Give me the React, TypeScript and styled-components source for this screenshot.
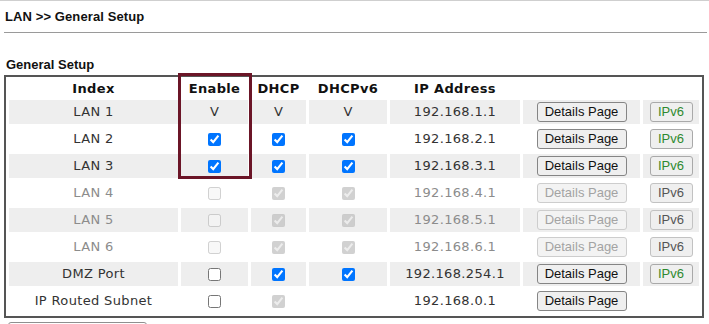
import React from 'react';
import styled, { createGlobalStyle } from 'styled-components';

const Global = createGlobalStyle`
  html, body { margin: 0; padding: 0; background: #fff; }
  body { font-family: "Liberation Sans", Arial, sans-serif; overflow: hidden; }
`;

const Page = styled.div`
  width: 709px;
  height: 324px;
  overflow: hidden;
  box-sizing: border-box;
  border-top: 1px solid #cfcfcf;
`;

const Title = styled.h1`
  margin: 0;
  padding: 8px 0 0 5px;
  font-size: 13px;
  line-height: 15px;
  font-weight: bold;
  color: #111;
  letter-spacing: 0.1px;
`;

const Rule = styled.hr`
  margin: 8px 2px 0 4px;
  border: 0;
  border-top: 1px solid #9a9a9a;
  height: 0;
`;

const SectionTitle = styled.h2`
  margin: 24px 0 0 6px;
  font-size: 13px;
  line-height: 15px;
  font-weight: bold;
  color: #111;
`;

const TableWrap = styled.div`
  position: relative;
  margin: 3px 0 0 4px;
  width: 700px;
`;

const Highlight = styled.div`
  position: absolute;
  top: -2px;
  left: 174px;
  width: 74px;
  height: 106px;
  box-sizing: border-box;
  border: 3px solid #6b1527;
  pointer-events: none;
`;

const Table = styled.table`
  width: 700px;
  table-layout: fixed;
  border-collapse: separate;
  border-spacing: 3px;
  border: 2px solid #555;
  font-family: "DejaVu Sans", Verdana, sans-serif;
  font-size: 13px;
  letter-spacing: 0.35px;
`;

const Th = styled.th`
  height: 17px;
  padding: 0;
  text-align: center;
  vertical-align: middle;
  font-weight: bold;
  color: #111;
  white-space: nowrap;
`;

const Row = styled.tr<{ $shade: boolean }>`
  background: ${p => (p.$shade ? '#eeeeee' : '#ffffff')};
`;

const Td = styled.td<{ $muted?: boolean }>`
  height: 24px;
  padding: 0;
  text-align: center;
  vertical-align: middle;
  color: ${p => (p.$muted ? '#8c8c8c' : '#333')};
  white-space: nowrap;
  line-height: 16px;
`;

const Check = styled.input.attrs({ type: 'checkbox' })`
  margin: 0;
  width: 13px;
  height: 13px;
  vertical-align: middle;
`;

type BtnKind = 'normal' | 'disabled' | 'green' | 'muted';

const Btn = styled.button<{ $kind: BtnKind; $w: number }>`
  width: ${p => p.$w}px;
  height: 20px;
  padding: 0;
  font-family: "Liberation Sans", Arial, sans-serif;
  font-size: 13px;
  line-height: 18px;
  letter-spacing: 0;
  border-radius: 3px;
  vertical-align: middle;
  background: ${p => (p.$kind === 'disabled' ? '#f3f3f3' : '#efefef')};
  border: 1px solid
    ${p =>
      p.$kind === 'disabled' ? '#cdcdcd' : p.$kind === 'muted' ? '#c2c2c2' : p.$kind === 'green' ? '#a9a9a9' : '#858585'};
  color: ${p =>
    p.$kind === 'disabled' ? '#a3a3a3' : p.$kind === 'green' ? '#2f8a2f' : p.$kind === 'muted' ? '#555' : '#111'};
`;

const BottomBox = styled.div`
  margin: 4px 0 0 8px;
  width: 139px;
  height: 22px;
  box-sizing: border-box;
  border: 1px solid #8f8f8f;
  border-radius: 3px;
  background: #fff;
`;

type Cell = 'V' | 'on' | 'off' | 'dis-on' | 'dis-off' | 'none';

interface LanRow {
  name: string;
  muted: boolean;
  enable: Cell;
  dhcp: Cell;
  dhcp6: Cell;
  ip: string;
  details: 'normal' | 'disabled';
  ipv6: 'green' | 'muted' | 'none';
}

const rows: LanRow[] = [
  { name: 'LAN 1', muted: false, enable: 'V', dhcp: 'V', dhcp6: 'V', ip: '192.168.1.1', details: 'normal', ipv6: 'green' },
  { name: 'LAN 2', muted: false, enable: 'on', dhcp: 'on', dhcp6: 'on', ip: '192.168.2.1', details: 'normal', ipv6: 'green' },
  { name: 'LAN 3', muted: false, enable: 'on', dhcp: 'on', dhcp6: 'on', ip: '192.168.3.1', details: 'normal', ipv6: 'green' },
  { name: 'LAN 4', muted: true, enable: 'dis-off', dhcp: 'dis-on', dhcp6: 'dis-on', ip: '192.168.4.1', details: 'disabled', ipv6: 'muted' },
  { name: 'LAN 5', muted: true, enable: 'dis-off', dhcp: 'dis-on', dhcp6: 'dis-on', ip: '192.168.5.1', details: 'disabled', ipv6: 'muted' },
  { name: 'LAN 6', muted: true, enable: 'dis-off', dhcp: 'dis-on', dhcp6: 'dis-on', ip: '192.168.6.1', details: 'disabled', ipv6: 'muted' },
  { name: 'DMZ Port', muted: false, enable: 'off', dhcp: 'on', dhcp6: 'on', ip: '192.168.254.1', details: 'normal', ipv6: 'green' },
  { name: 'IP Routed Subnet', muted: false, enable: 'off', dhcp: 'dis-on', dhcp6: 'none', ip: '192.168.0.1', details: 'normal', ipv6: 'none' },
];

const colWidths = [169, 67, 55, 78, 130, 117, 56];

function CellContent({ c }: { c: Cell }) {
  switch (c) {
    case 'V':
      return <>V</>;
    case 'on':
      return <Check defaultChecked />;
    case 'off':
      return <Check />;
    case 'dis-on':
      return <Check defaultChecked disabled />;
    case 'dis-off':
      return <Check disabled />;
    default:
      return null;
  }
}

export default function App() {
  return (
    <Page>
      <Global />
      <Title>LAN &gt;&gt; General Setup</Title>
      <Rule />
      <SectionTitle>General Setup</SectionTitle>
      <TableWrap>
        <Table>
          <colgroup>
            {colWidths.map((w, i) => (
              <col key={i} style={{ width: w }} />
            ))}
          </colgroup>
          <thead>
            <tr>
              <Th>Index</Th>
              <Th>Enable</Th>
              <Th>DHCP</Th>
              <Th>DHCPv6</Th>
              <Th>IP Address</Th>
              <Th />
              <Th />
            </tr>
          </thead>
          <tbody>
            {rows.map((r, i) => (
              <Row key={r.name} $shade={i % 2 === 0}>
                <Td $muted={r.muted}>{r.name}</Td>
                <Td $muted={r.muted}>
                  <CellContent c={r.enable} />
                </Td>
                <Td $muted={r.muted}>
                  <CellContent c={r.dhcp} />
                </Td>
                <Td $muted={r.muted}>
                  <CellContent c={r.dhcp6} />
                </Td>
                <Td $muted={r.muted}>{r.ip}</Td>
                <Td>
                  <Btn $kind={r.details} $w={90} disabled={r.details === 'disabled'}>
                    Details Page
                  </Btn>
                </Td>
                <Td>
                  {r.ipv6 !== 'none' && (
                    <Btn $kind={r.ipv6} $w={43}>
                      IPv6
                    </Btn>
                  )}
                </Td>
              </Row>
            ))}
          </tbody>
        </Table>
        <Highlight />
      </TableWrap>
      <BottomBox />
    </Page>
  );
}
